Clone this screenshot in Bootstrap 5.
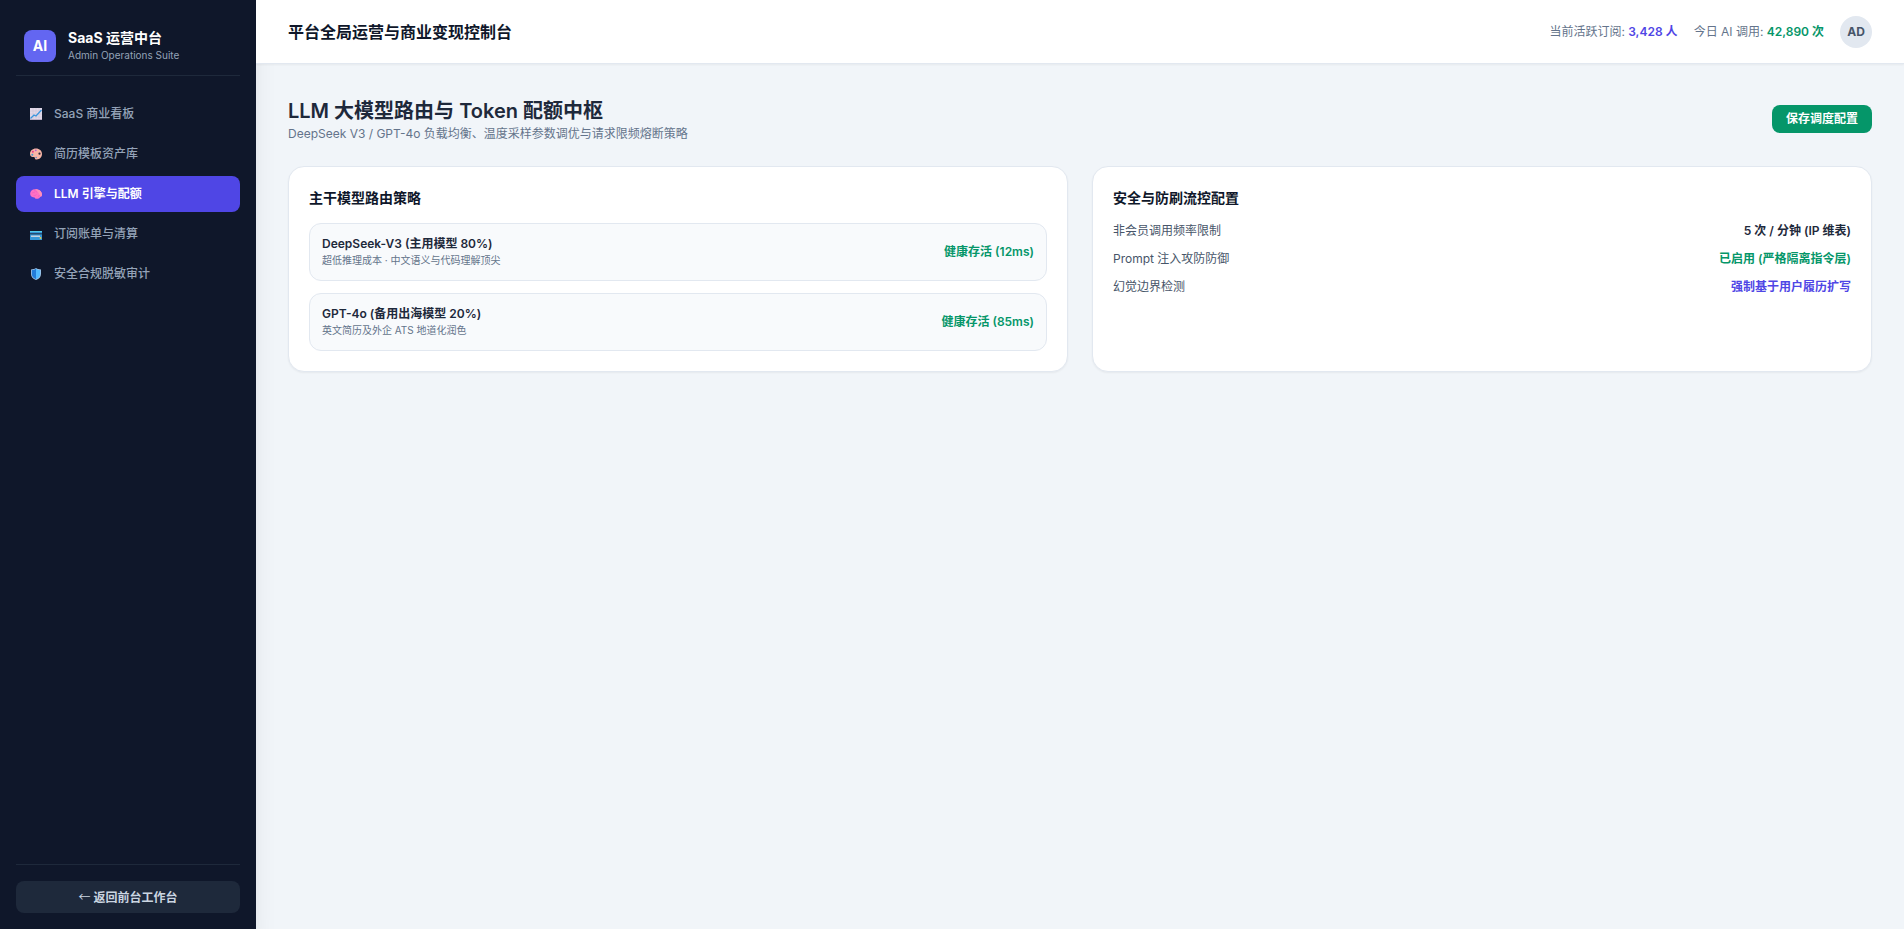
<!DOCTYPE html>
<html lang="zh-CN">
<head>
<meta charset="utf-8">
<meta name="viewport" content="width=device-width, initial-scale=1">
<title>SaaS 运营中台</title>
<link href="https://cdn.jsdelivr.net/npm/bootstrap@5.3.0/dist/css/bootstrap.min.css" rel="stylesheet">
<style>
:root{--ink:#1e293b;--muted:#64748b;--indigo:#4f46e5;--green:#059669;--edge:#e2e8f0}
body{font-family:Inter,"Noto Sans CJK SC",sans-serif;font-size:12px;line-height:16px;color:var(--ink);background:#f1f5f9}
.side-panel{width:256px;background:#0f172a;box-shadow:0 20px 25px -5px rgba(0,0,0,.1),0 8px 10px -6px rgba(0,0,0,.1);z-index:2}
.brand-row{padding:12px 8px;gap:12px;border-bottom:1px solid #1e293b;margin-bottom:20px}
.brand-mark{width:32px;height:32px;border-radius:8px;background:#6366f1;font-size:14px}
.brand-name{font-size:14px;line-height:20px;font-weight:700;color:#fff}
.brand-sub{font-size:10px;line-height:15px;color:#94a3b8}
.side-link{height:36px;padding:0 14px;gap:12px;border-radius:8px;font-weight:500;color:#94a3b8;text-decoration:none}
.side-link:hover{color:#fff}
.side-link.active{background:var(--indigo);color:#fff;font-weight:600}
.side-link svg{width:12px;height:12px;flex:none}
.side-foot{border-top:1px solid #1e293b;padding-top:16px}
.back-btn{height:32px;border:0;border-radius:8px;background:#1e293b;color:#cbd5e1;font-weight:600}
.back-arrow{font-family:"Noto Sans CJK SC",sans-serif;font-weight:400}
.top-bar{height:64px;border-bottom:1px solid var(--edge);box-shadow:0 1px 2px rgba(0,0,0,.05);padding:0 32px;z-index:3}
.top-bar h1{font-size:16px;line-height:24px;font-weight:600;color:#0f172a}
.stat-text{color:var(--muted)}
.avatar-dot{width:32px;height:32px;background:var(--edge);color:#475569;font-weight:700}
.page-body{padding:32px}
.page-title{font-size:20px;line-height:30px;font-weight:600;margin-bottom:0}
.save-btn{height:28px;padding:0 14px;border:0;border-radius:8px;background:var(--green);color:#fff;font-weight:700}
.panel-card{border:1px solid var(--edge);border-radius:16px;padding:20px;box-shadow:0 1px 2px rgba(0,0,0,.05)}
.panel-card h3{font-size:14px;line-height:22px;font-weight:600;margin-bottom:14px;color:#0f172a}
.route-box{border:1px solid var(--edge);border-radius:12px;background:#f8fafc;padding:12px}
.route-note{font-size:10px;color:var(--muted)}
.rule-name{color:#475569;font-weight:400}
.fw-strong{font-weight:600}
.c-indigo{color:var(--indigo)}
.c-green{color:var(--green)}
.gap-12{gap:12px}
</style>
</head>
<body>
<div class="d-flex min-vh-100">
  <aside class="side-panel d-flex flex-column flex-shrink-0 p-3 position-relative">
    <div class="brand-row d-flex align-items-center">
      <div class="brand-mark d-flex align-items-center justify-content-center text-white fw-bold">AI</div>
      <div>
        <div class="brand-name">SaaS 运营中台</div>
        <div class="brand-sub">Admin Operations Suite</div>
      </div>
    </div>
    <nav class="d-flex flex-column gap-1">
      <a href="#" class="side-link d-flex align-items-center">
        <svg viewBox="0 0 12 12" aria-hidden="true"><path d="M0 0h12v12H0z" fill="#e2d9e8"/><path d="M0 3h12M0 6h12M0 9h12M3 0v12M6 0v12M9 0v12" stroke="#c6bdd0" stroke-width=".4"/><path d="M0 11.500h12" stroke="#b9adc4"/><path d="M.5 10.500 4 7l2 1 5.500-6" fill="none" stroke="#3a96dd" stroke-width="1.300"/></svg>
        <span>SaaS 商业看板</span>
      </a>
      <a href="#" class="side-link d-flex align-items-center">
        <svg viewBox="0 0 12 12" aria-hidden="true"><path d="M6 .5C2.500.5 0 2.800 0 5.800c0 2.400 1.600 3.400 3 3.200 1.300-.1 1.800.3 1.900 1.300.1 1 .8 1.400 1.800 1.300C10 11.200 12 8.800 12 6 12 2.800 9.400.5 6 .5Z" fill="#f8b5a6"/><circle cx="9.500" cy="5.700" r="1.100" fill="#27253a"/><circle cx="5.800" cy="2.300" r=".9" fill="#b45bd0"/><circle cx="2.900" cy="3.700" r="1" fill="#e83f8a"/><circle cx="2.300" cy="6.700" r="1" fill="#4098cf"/><circle cx="6.200" cy="9.500" r=".8" fill="#5b91cf"/></svg>
        <span>简历模板资产库</span>
      </a>
      <a href="#" class="side-link active d-flex align-items-center" aria-current="page">
        <svg viewBox="0 0 12 12" aria-hidden="true"><path d="M.2 6.300C-.1 3.400 2 1.200 5 1.200c3.800-.3 7 2 7 5.400 0 1.700-.8 2.400-2 2.500-.3 1.400-1.700 2-3 1.600-1.100.3-2.100-.3-2.400-1.200C2.600 9.400.4 8.800.2 6.300Z" fill="#ff70c4"/><path d="M5 1.200c3.800-.3 7 2 7 5.400 0 1-.3 1.700-.8 2C9 7.500 9.500 4 5 1.200Z" fill="#ff8fb8"/><path d="M1.800 5.500c.8-1 2-1.200 3-.7M4 2.800c1.500-.2 2.700.5 3 1.700M3.500 7.500c1.500.3 2.500-.3 3-1.200M8 8.800c.8-.4 1.300-1 1.300-1.800" fill="none" stroke="#e859b9" stroke-width=".5"/></svg>
        <span>LLM 引擎与配额</span>
      </a>
      <a href="#" class="side-link d-flex align-items-center">
        <svg viewBox="0 0 12 12" aria-hidden="true"><rect y="3" width="12" height="9" rx=".6" fill="#3497d8"/><path d="M0 3h12v1H0Z" fill="#54cbe9"/><path d="M0 5h12v1.500H0Z" fill="#254c70"/><path d="M1 7.500h9V9H1Z" fill="#c5d3df"/><circle cx="10.500" cy="10" r=".9" fill="#e6c943"/></svg>
        <span>订阅账单与清算</span>
      </a>
      <a href="#" class="side-link d-flex align-items-center">
        <svg viewBox="0 0 12 12" aria-hidden="true"><path d="M6 0c1.400 1.100 3 1.400 5 1.400v4.300C11 8.900 9 11 6 12 3 11 1 8.900 1 5.700V1.400C3 1.400 4.600 1.100 6 0Z" fill="#a4c5e6"/><path d="M6 .8v10.400c-2.700-1-4.200-2.800-4.200-5.500V2.100C3.500 2 4.800 1.700 6 .8Z" fill="#227bd8"/><path d="M6 .8v10.400c2.700-1 4.200-2.800 4.200-5.500V2.100C8.500 2 7.200 1.700 6 .8Z" fill="#51b9ff"/></svg>
        <span>安全合规脱敏审计</span>
      </a>
    </nav>
    <div class="side-foot mt-auto">
      <button type="button" class="back-btn w-100"><span class="back-arrow">←</span> 返回前台工作台</button>
    </div>
  </aside>

  <div class="flex-grow-1 d-flex flex-column">
    <header class="top-bar position-relative d-flex align-items-center justify-content-between bg-white">
      <h1 class="mb-0">平台全局运营与商业变现控制台</h1>
      <div class="stat-text d-flex align-items-center gap-3">
        <span>当前活跃订阅: <span class="fw-strong c-indigo">3,428 人</span></span>
        <span>今日 AI 调用: <span class="fw-strong c-green">42,890 次</span></span>
        <span class="avatar-dot rounded-circle d-flex align-items-center justify-content-center">AD</span>
      </div>
    </header>

    <main class="page-body">
      <div class="d-flex align-items-center justify-content-between mb-4">
        <div>
          <h2 class="page-title">LLM 大模型路由与 Token 配额中枢</h2>
          <p class="stat-text mb-0">DeepSeek V3 / GPT-4o 负载均衡、温度采样参数调优与请求限频熔断策略</p>
        </div>
        <button type="button" class="save-btn">保存调度配置</button>
      </div>

      <div class="row g-4">
        <div class="col-6">
          <section class="panel-card bg-white h-100">
            <h3>主干模型路由策略</h3>
            <div class="d-flex flex-column gap-12">
              <div class="route-box d-flex align-items-center justify-content-between">
                <div>
                  <div class="fw-strong">DeepSeek-V3 (主用模型 80%)</div>
                  <div class="route-note">超低推理成本 · 中文语义与代码理解顶尖</div>
                </div>
                <span class="fw-strong c-green">健康存活 (12ms)</span>
              </div>
              <div class="route-box d-flex align-items-center justify-content-between">
                <div>
                  <div class="fw-strong">GPT-4o (备用出海模型 20%)</div>
                  <div class="route-note">英文简历及外企 ATS 地道化润色</div>
                </div>
                <span class="fw-strong c-green">健康存活 (85ms)</span>
              </div>
            </div>
          </section>
        </div>
        <div class="col-6">
          <section class="panel-card bg-white h-100">
            <h3>安全与防刷流控配置</h3>
            <div class="d-flex flex-column gap-12">
              <div class="d-flex justify-content-between"><span class="rule-name">非会员调用频率限制</span><span class="fw-strong">5 次 / 分钟 (IP 维表)</span></div>
              <div class="d-flex justify-content-between"><span class="rule-name">Prompt 注入攻防防御</span><span class="fw-strong c-green">已启用 (严格隔离指令层)</span></div>
              <div class="d-flex justify-content-between"><span class="rule-name">幻觉边界检测</span><span class="fw-strong c-indigo">强制基于用户履历扩写</span></div>
            </div>
          </section>
        </div>
      </div>
    </main>
  </div>
</div>
<script src="https://cdn.jsdelivr.net/npm/bootstrap@5.3.0/dist/js/bootstrap.bundle.min.js"></script>
</body>
</html>
